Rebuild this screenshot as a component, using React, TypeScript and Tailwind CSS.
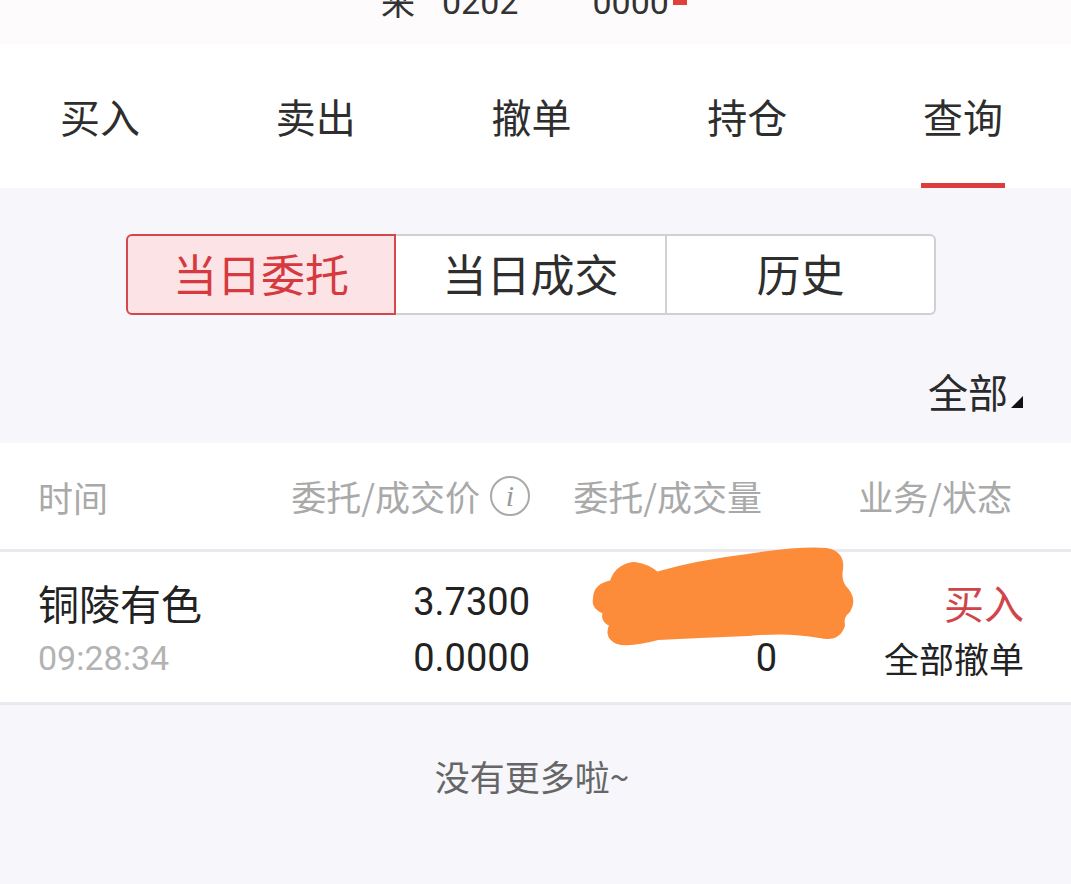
import React from "react";

const CJK = { fontFamily: '"Noto Sans CJK SC", "Noto Sans", sans-serif' };
const NUM = { fontFamily: 'Roboto, "Noto Sans CJK SC", sans-serif' };

function Tab({ label, active }: { label: string; active?: boolean }) {
  return (
    <div className="flex flex-col items-center h-full w-[84px]">
      <div className="flex-1 flex items-center pt-[4px] text-[40px] text-[#2e2e2e] whitespace-nowrap">
        {label}
      </div>
      <div className={active ? "h-[5px] w-[84px] bg-[#dd3c3c]" : "h-[5px] w-[84px]"} />
    </div>
  );
}

export default function App() {
  return (
    <div className="w-[1071px] h-[884px] bg-[#f6f6fb] overflow-hidden" style={CJK}>
      {/* top clipped strip */}
      <div className="h-[44px] bg-[#fefbfd] overflow-hidden">
        <div className="flex items-end h-[15px] pl-[381px] text-[34px] leading-none text-[#333]">
          <span className="mb-[-3px]">来</span>
          <span className="ml-[27px] mb-[-4px]" style={NUM}>0202</span>
          <span className="ml-[74px] mb-[-4px]" style={NUM}>0000</span>
          <span className="self-start h-[5px] w-[14px] bg-[#e0403a] ml-[4px]" />
        </div>
      </div>

      {/* main tabs */}
      <div className="h-[144px] bg-white flex justify-between pl-[58px] pr-[66px]">
        <Tab label="买入" />
        <Tab label="卖出" />
        <Tab label="撤单" />
        <Tab label="持仓" />
        <Tab label="查询" active />
      </div>

      {/* segmented */}
      <div className="pt-[46px] pl-[126px]">
        <div className="flex w-[810px] h-[81px]">
          <div className="w-[270px] h-full flex items-center justify-center pb-[3px] border-2 border-[#d4474a] rounded-l-[6px] bg-[#fbe3e6] text-[#d63a3f] text-[44px]">
            当日委托
          </div>
          <div className="w-[271px] h-full flex items-center justify-center pb-[3px] border-y-2 border-r-2 border-[#d0d0d4] bg-white text-[#2e2e2e] text-[44px]">
            当日成交
          </div>
          <div className="w-[269px] h-full flex items-center justify-center pb-[3px] border-y-2 border-r-2 border-[#d0d0d4] rounded-r-[6px] bg-white text-[#2e2e2e] text-[44px]">
            历史
          </div>
        </div>
      </div>

      {/* filter */}
      <div className="h-[128px] flex items-center justify-end pr-[48px] pt-[24px]">
        <div className="flex items-end">
          <span className="text-[40px] leading-[48px] text-[#2a2a2a]">全部</span>
          <svg width="12" height="12" viewBox="0 0 12 12" className="mb-[7px] ml-[3px]">
            <polygon points="12,0 12,12 0,12" fill="#111" />
          </svg>
        </div>
      </div>

      {/* table header */}
      <div className="h-[106px] bg-white flex items-center pl-[38px] pr-[47px] text-[35px] text-[#a9a9a9]">
        <div className="w-[242px] pt-[2px]">时间</div>
        <div className="w-[250px] flex items-center justify-end">
          <span>委托/成交价</span>
          <span className="ml-[10px] w-[40px] h-[40px] rounded-full border-2 border-[#a9a9a9] flex items-center justify-center text-[30px] italic leading-none text-[#9a9a9a]" style={{ fontFamily: '"Liberation Serif", serif' }}>
            i
          </span>
        </div>
        <div className="w-[247px] text-right pr-[15px]">委托/成交量</div>
        <div className="w-[247px] text-right pr-[12px]">业务/状态</div>
      </div>
      <div className="h-[3px] bg-[#e9e9ef]" />

      {/* row */}
      <div className="relative h-[150px] bg-white flex pl-[38px] pr-[47px] pt-[25px]">
        <div className="w-[242px] flex flex-col">
          <div className="h-[50px] leading-[50px] text-[41px] text-[#222]">铜陵有色</div>
          <div className="h-[46px] leading-[46px] mt-[8px] text-[34px] text-[#b3b3b3]" style={NUM}>09:28:34</div>
        </div>
        <div className="w-[250px] flex flex-col items-end">
          <div className="h-[50px] leading-[50px] text-[38px] text-[#222]" style={NUM}>3.7300</div>
          <div className="h-[46px] leading-[46px] mt-[8px] text-[38px] text-[#222]" style={NUM}>0.0000</div>
        </div>
        <div className="w-[247px] flex flex-col items-end">
          <div className="h-[50px]" />
          <div className="h-[46px] leading-[46px] mt-[8px] text-[38px] text-[#222]" style={NUM}>0</div>
        </div>
        <div className="w-[247px] flex flex-col items-end">
          <div className="h-[50px] leading-[50px] text-[40px] text-[#d0454a]">买入</div>
          <div className="h-[46px] leading-[46px] mt-[8px] text-[35px] text-[#222]">全部撤单</div>
        </div>
        <svg className="absolute left-[588px] top-[-5px]" width="268" height="100" viewBox="0 0 268 100">
          <path
            d="M10 52 Q10 40 26 38 Q30 22 46 20 Q60 22 68 30 Q110 18 160 12 Q210 4 238 6 Q252 8 250 22 Q248 34 254 42 Q264 52 258 62 Q250 68 252 78 Q248 90 232 86 Q200 80 160 84 Q110 86 70 88 Q40 96 30 92 Q20 88 28 76 Q14 72 22 64 Q8 60 10 52 Z"
            fill="#fd8c3a"
            stroke="#fd8c3a"
            strokeWidth="10"
            strokeLinejoin="round"
          />
        </svg>
      </div>
      <div className="h-[3px] bg-[#e9e9ef]" />

      {/* footer */}
      <div className="pt-[48px] flex justify-center">
        <span className="text-[35px] leading-[46px] text-[#666] ml-[-7px]">没有更多啦~</span>
      </div>
    </div>
  );
}
